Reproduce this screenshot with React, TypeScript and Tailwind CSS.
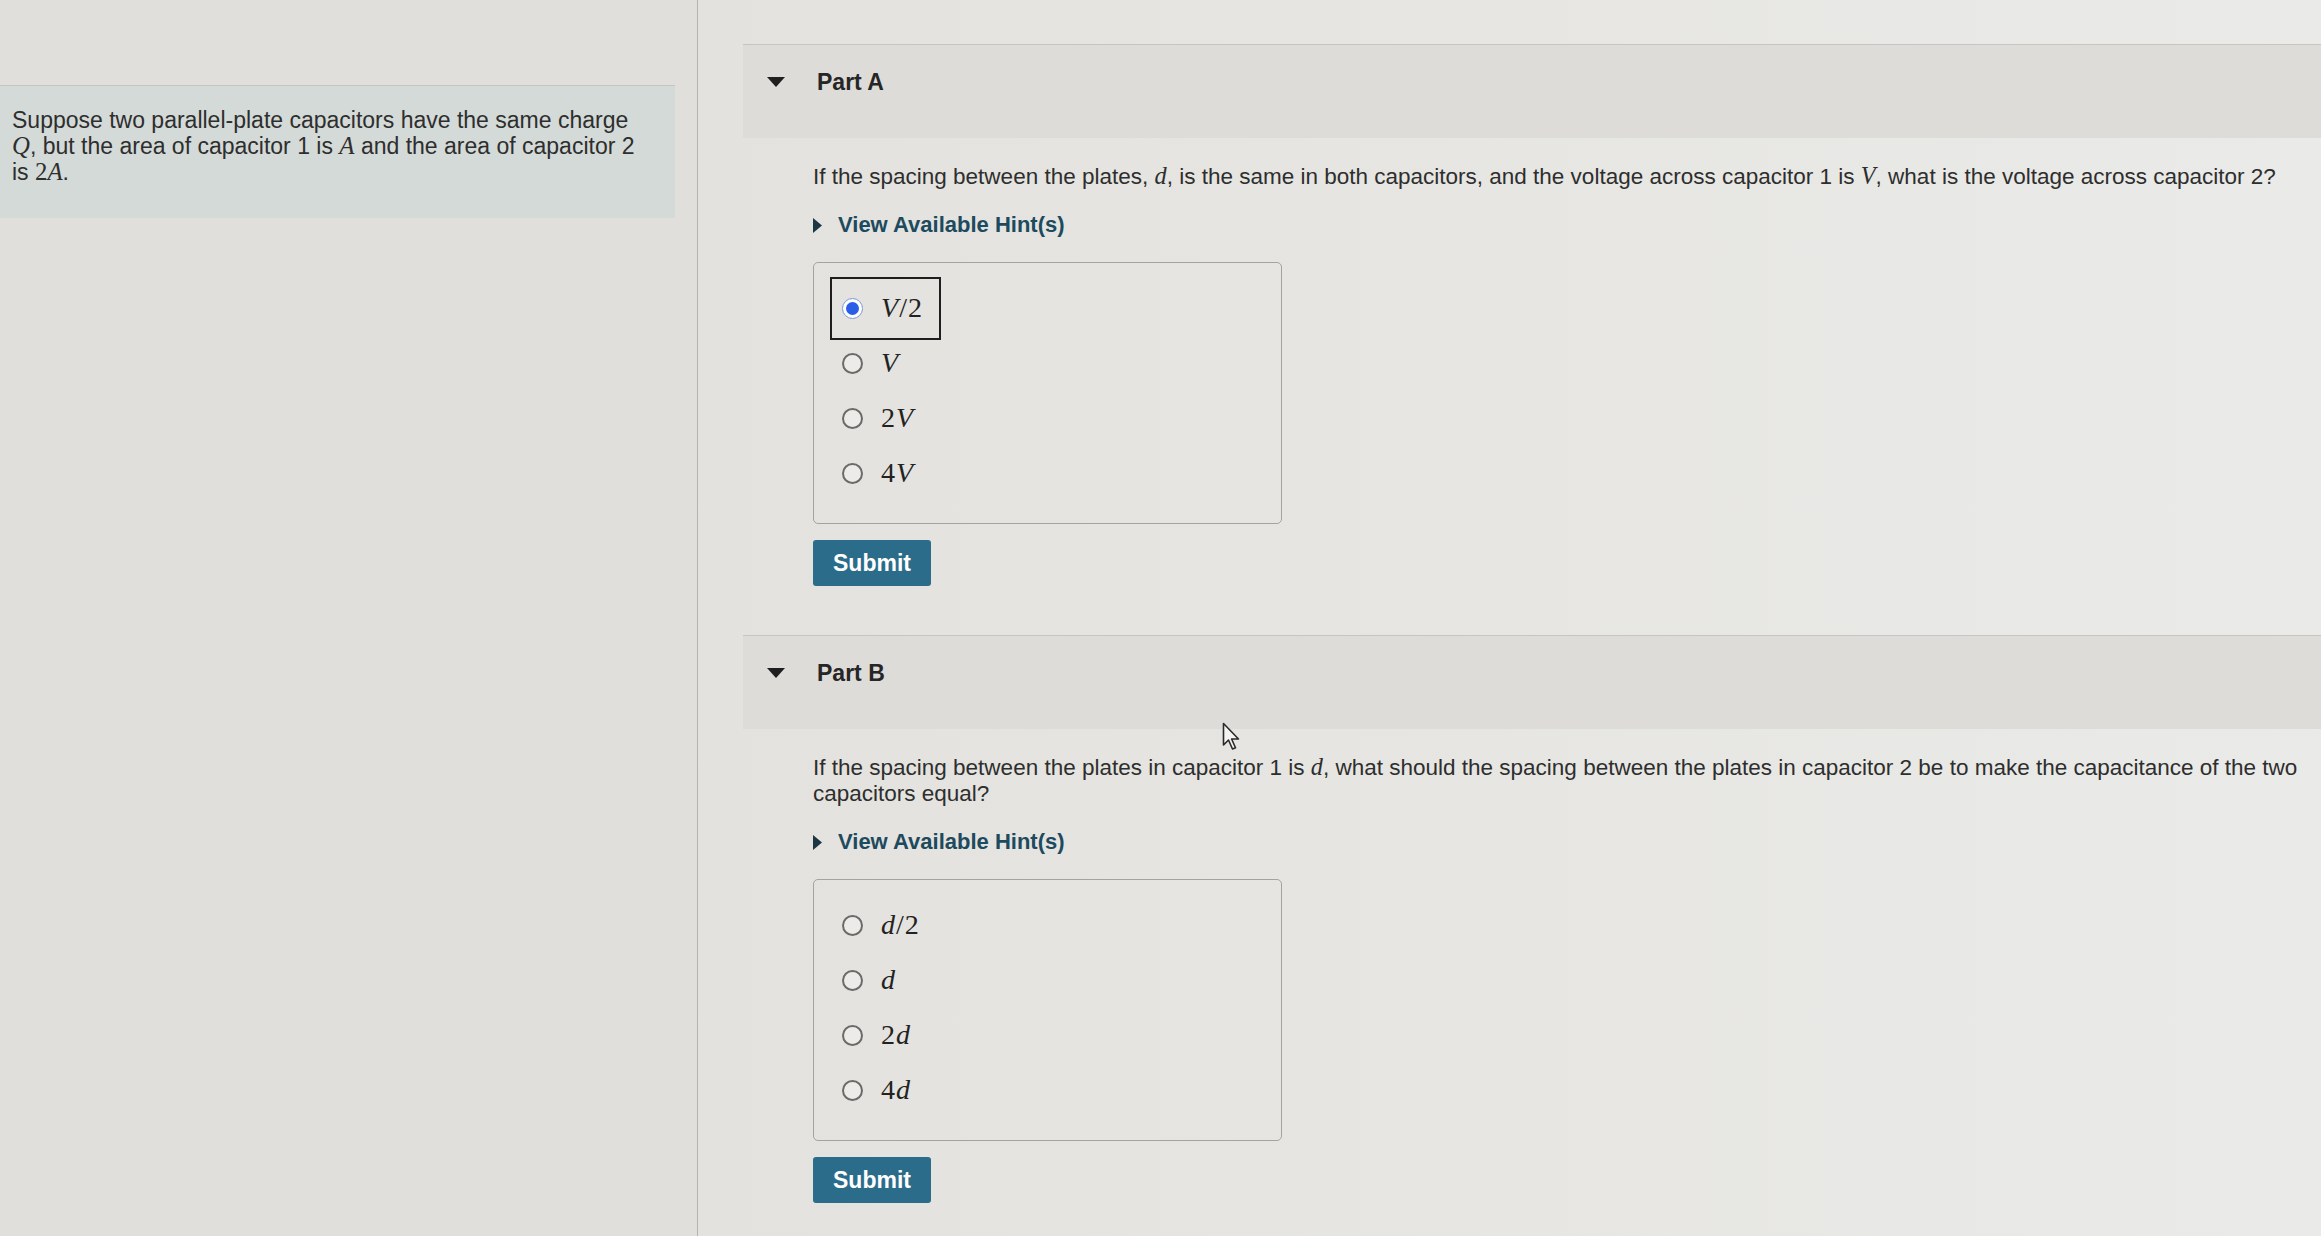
import React from 'react';

function Var({ children }: { children: React.ReactNode }) {
  return <span className="font-['Liberation_Serif',serif] text-[1.08em] italic">{children}</span>;
}

function Num({ children }: { children: React.ReactNode }) {
  return <span className="font-['Liberation_Serif',serif] text-[1.08em]">{children}</span>;
}

function DownCaret() {
  return (
    <svg width="18" height="10" viewBox="0 0 18 10" className="shrink-0">
      <path d="M0 0 H18 L9 10 Z" fill="#1f1f1f" />
    </svg>
  );
}

function RightCaret() {
  return (
    <svg width="9" height="15" viewBox="0 0 9 15" className="shrink-0">
      <path d="M0 0 L9 7.5 L0 15 Z" fill="#1c3644" />
    </svg>
  );
}

interface Option {
  id: string;
  label: React.ReactNode;
}

interface PartProps {
  title: string;
  question: React.ReactNode;
  options: Option[];
  selected?: string;
  className?: string;
}

function Part({ title, question, options, selected, className = '' }: PartProps) {
  return (
    <section className={className}>
      <div className="flex h-[94px] items-start border-t border-[#c6c5c1] bg-[#dddcd8] pl-[24px] pt-[23px]">
        <span className="flex h-[28px] items-center">
          <DownCaret />
        </span>
        <h2 className="ml-[32px] text-[23px] font-bold leading-[28px] text-[#262626]">{title}</h2>
      </div>

      <div className="pl-[70px] pr-[12px]">
        <p className="mt-[25px] text-[22.5px] leading-[26px] text-[#2e2e2e]">{question}</p>

        <button className="mt-[22px] flex items-center gap-[16px] text-[22px] font-bold leading-[26px] text-[#1d4a5e]">
          <RightCaret />
          View Available Hint(s)
        </button>

        <div className="mt-[24px] flex w-[469px] flex-col items-start rounded-[5px] border border-[#a4a39f] pb-[22px] pl-[20px] pt-[18px]">
          {options.map((opt) => {
            const checked = opt.id === selected;
            return (
              <label
                key={opt.id}
                className={
                  checked
                    ? 'flex h-[55px] items-center gap-[18px] pl-[8px] pr-[14px] outline-[2.5px] outline-offset-[2px] outline-[#1e1e1e]'
                    : 'flex h-[55px] items-center gap-[18px] pl-[8px] pr-[14px]'
                }
              >
                {checked ? (
                  <span className="flex h-[21px] w-[21px] items-center justify-center rounded-full border-[1.5px] border-[#7d97d6] bg-white">
                    <span className="h-[13px] w-[13px] rounded-full bg-[#2a5ee6]" />
                  </span>
                ) : (
                  <span className="h-[21px] w-[21px] rounded-full border-2 border-[#6a6a6a] bg-[#ecebe7]" />
                )}
                <span className="text-[26px] leading-none tracking-[1px] text-[#222]">{opt.label}</span>
              </label>
            );
          })}
        </div>

        <button className="mt-[16px] h-[46px] w-[118px] rounded-[3px] bg-[#2b6c8b] text-[23px] font-bold text-white">
          Submit
        </button>
      </div>
    </section>
  );
}

export default function App() {
  const partA: Option[] = [
    { id: 'a1', label: <><Var>V</Var><Num>/2</Num></> },
    { id: 'a2', label: <Var>V</Var> },
    { id: 'a3', label: <><Num>2</Num><Var>V</Var></> },
    { id: 'a4', label: <><Num>4</Num><Var>V</Var></> },
  ];

  const partB: Option[] = [
    { id: 'b1', label: <><Var>d</Var><Num>/2</Num></> },
    { id: 'b2', label: <Var>d</Var> },
    { id: 'b3', label: <><Num>2</Num><Var>d</Var></> },
    { id: 'b4', label: <><Num>4</Num><Var>d</Var></> },
  ];

  return (
    <div className="relative flex min-h-screen w-full bg-[#e4e3df] font-['Liberation_Sans',Arial,sans-serif]">
      <aside className="w-[698px] shrink-0 border-r border-[#b4b3af] bg-[#e0dfdb] pt-[85px]">
        <div className="w-[675px] border-t border-[#c3c6c3] bg-[#d4dad7] pb-[33px] pl-[12px] pt-[22px]">
          <p className="w-[632px] text-[23px] leading-[25px] text-[#2e2e2e]">
            Suppose two parallel-plate capacitors have the same charge <Var>Q</Var>, but the area of
            capacitor 1 is <Var>A</Var> and the area of capacitor 2 is <Num>2</Num>
            <Var>A</Var>.
          </p>
        </div>
      </aside>

      <main className="flex-1 bg-gradient-to-r from-[#e3e2de] to-[#eaeae8] pb-[30px] pl-[45px] pt-[44px]">
        <Part
          title="Part A"
          selected="a1"
          options={partA}
          question={
            <>
              If the spacing between the plates, <Var>d</Var>, is the same in both capacitors, and the
              voltage across capacitor 1 is <Var>V</Var>, what is the voltage across capacitor 2?
            </>
          }
        />
        <Part
          title="Part B"
          className="mt-[49px]"
          options={partB}
          question={
            <>
              If the spacing between the plates in capacitor 1 is <Var>d</Var>, what should the spacing
              between the plates in capacitor 2 be to make the capacitance of the two capacitors equal?
            </>
          }
        />
      </main>

      {/* mouse pointer */}
      <svg
        width="20"
        height="30"
        viewBox="0 0 20 30"
        className="pointer-events-none absolute left-[1222px] top-[722px]"
      >
        <path
          d="M1.5 1.5 L1.5 23 L6.5 18 L10.5 27 L13.5 25.8 L9.6 17 L16.5 17 Z"
          fill="#f4f4f2"
          stroke="#2a2a2a"
          strokeWidth="1.6"
          strokeLinejoin="round"
        />
      </svg>
    </div>
  );
}
